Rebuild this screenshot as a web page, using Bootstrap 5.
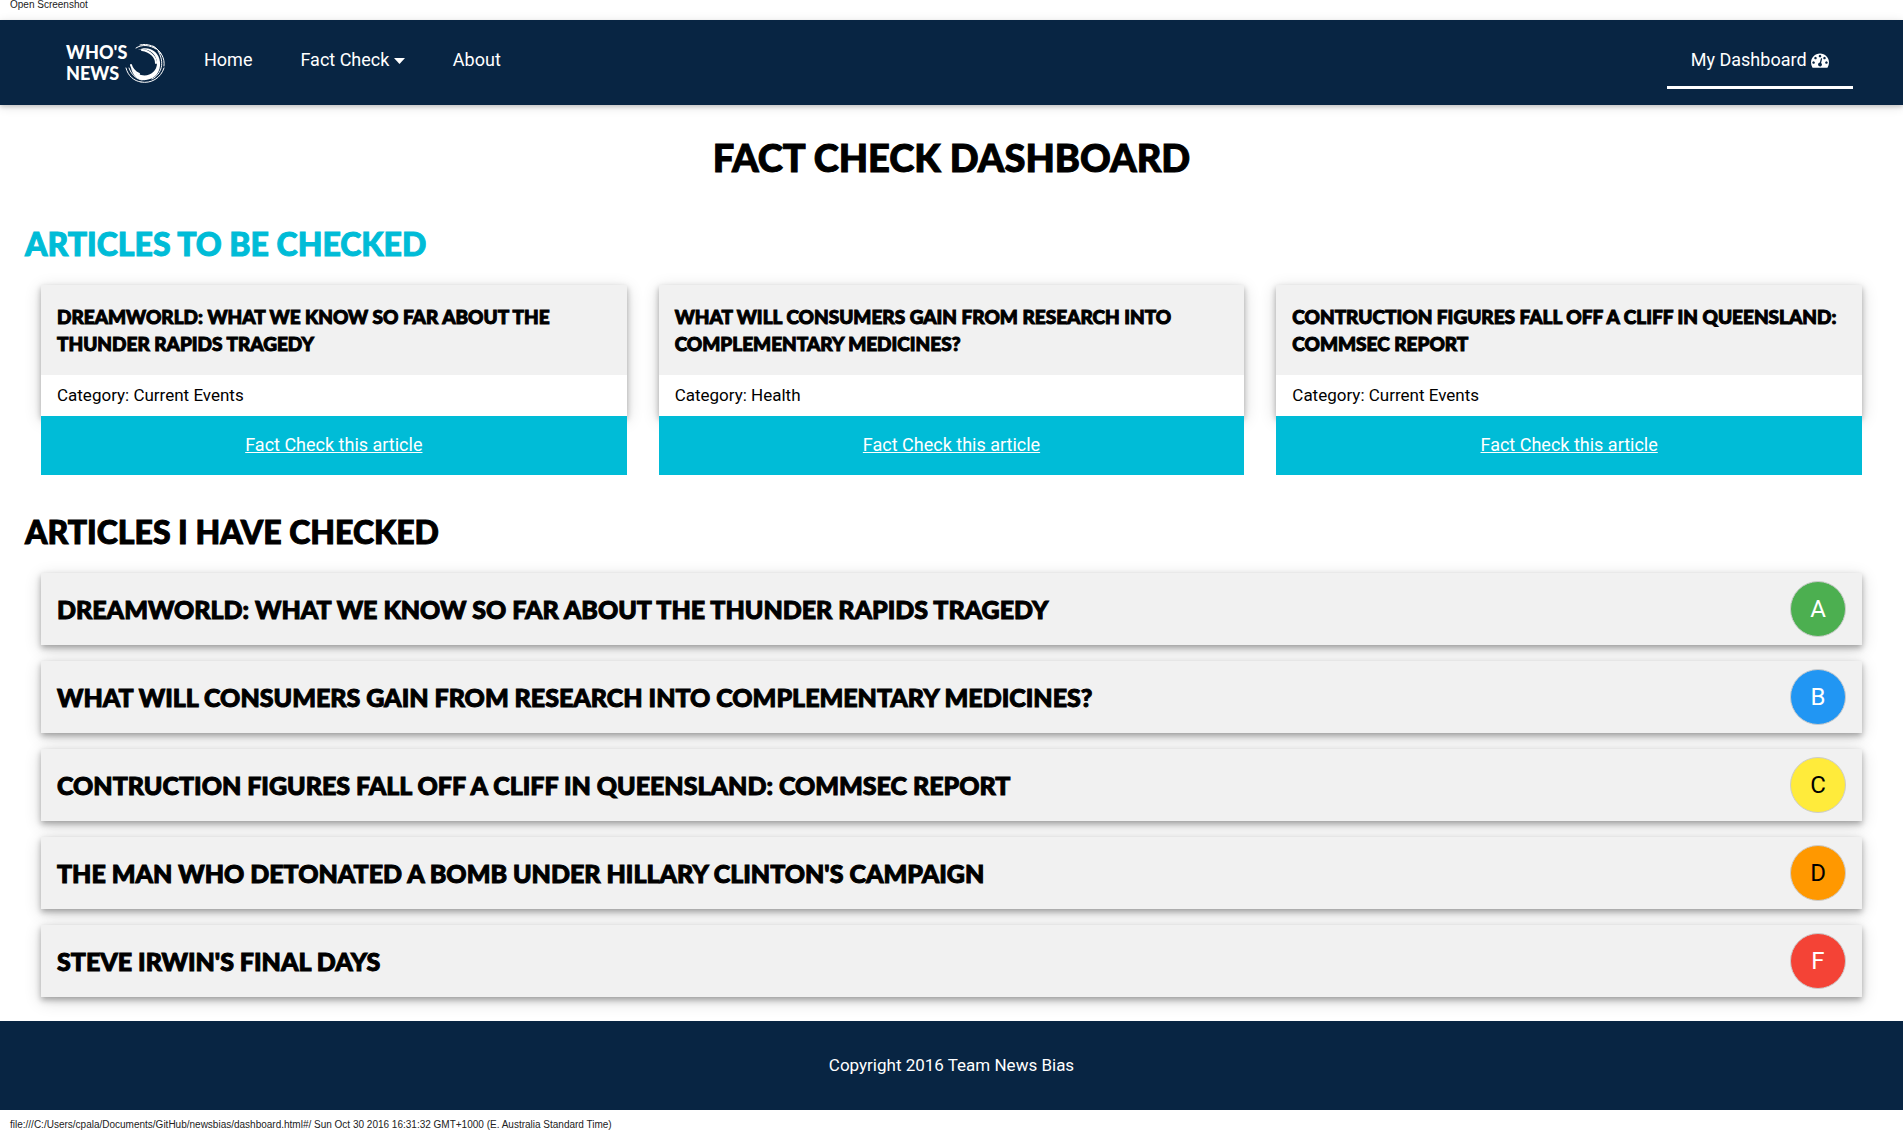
<!DOCTYPE html>
<html lang="en">
<head>
<meta charset="utf-8">
<meta name="viewport" content="width=device-width, initial-scale=1">
<title>Who's News - Fact Check Dashboard</title>
<link rel="stylesheet" href="https://cdn.jsdelivr.net/npm/bootstrap@5.3.0/dist/css/bootstrap.min.css">
<style>
body { font-family: Roboto, sans-serif; font-size: 17px; line-height: 25px; color: #000; background: #fff; }
.strip { height: 20px; padding: 0 10px; font: 10px/10px "Liberation Sans", Arial, sans-serif; color: #222; }
.strip-end { padding-top: 10px; }
.site-nav { background: #082543; height: 85px; padding: 10px 50px 10px 66px; box-shadow: 0 2px 4px rgba(0,0,0,.16), 0 2px 10px rgba(0,0,0,.12); }
.site-nav .nav-link { color: #fff; font-size: 18px; line-height: 27px; padding: 16px 24px 13px; border-bottom: 3px solid transparent; }
.site-nav .nav-link.active { border-bottom-color: #fff; }
.brand { color: #fff; font: 900 18px/21px Lato, sans-serif; width: 114px; }
.brand svg { width: 40px; height: 40px; margin-left: -2px; }
.caret { width: 11px; height: 6px; }
.gauge { width: 18px; height: 18px; vertical-align: -3px; }
.heading-font { font-family: Lato, sans-serif; font-weight: 900; text-transform: uppercase; margin: 0; -webkit-text-stroke: 1px currentColor; }
h1.heading-font { font-size: 38px; line-height: 52px; }
h2.heading-font { font-size: 32px; line-height: 44px; margin-bottom: 19px; }
.text-cyan { color: #00bcd7; }
main { padding: 26px 25px 24px; }
.todo { padding-top: 39px; }
.done { padding-top: 35px; }
.panel { background: #f1f1f1; box-shadow: 0 3px 6px rgba(0,0,0,.3), 0 4px 16px rgba(0,0,0,.16); }
.article { background: #fff; }
.article-head { background: #f1f1f1; padding: 18px 16px; }
.article-head h3 { font-size: 19px; line-height: 27px; }
.check-link { background: #00bcd7; color: #fff; font-size: 18px; line-height: 27px; padding: 15px 16px 17px; position: relative; }
.check-link:hover { color: #fff; }
.checked { height: 72px; padding: 0 16px; }
.checked h3 { font-size: 25px; line-height: 36px; }
.grade { width: 56px; height: 56px; font-size: 24px; line-height: 36px; border: 1px solid #ccc; }
.grade-a { background: #4caf50; color: #fff; }
.grade-b { background: #2196f3; color: #fff; }
.grade-c { background: #ffeb3b; }
.grade-d { background: #ff9800; }
.grade-f { background: #f44336; color: #fff; }
.site-foot { background: #082543; color: #fff; padding: 32px 16px; }
</style>
<script src="https://cdn.jsdelivr.net/npm/bootstrap@5.3.0/dist/js/bootstrap.bundle.min.js"></script>
</head>
<body>
<div class="strip">Open Screenshot</div>
<nav class="site-nav d-flex align-items-start">
  <a class="brand d-flex align-items-center align-self-center text-decoration-none" href="#">
    <span>WHO'S<br>NEWS</span>
    <svg class="flex-shrink-0" viewBox="0 0 40 40" fill="none" stroke="#fff" stroke-linecap="round" aria-hidden="true">
      <path fill="#fff" stroke="none" d="M13 7C23 4 32 11 32 20C32 29 24 34 16 32C12 31 8 29 6 24C7 33 14 38 21 37C30 36 36 29 35 19C34 8 23 2 13 7Z"/>
      <path d="M11 5C17 1 25 2 31 6" stroke-width="1"/>
      <path d="M15 2C22 0 32 3 36 11" stroke-width="1"/>
      <path d="M28 3C36 8 40 15 39 23" stroke-width="1"/>
      <path d="M33 8C40 19 37 31 27 36" stroke-width="1"/>
      <path d="M39 25C36 35 26 41 16 39" stroke-width="1"/>
      <path d="M1 25C3 33 9 38 16 39" stroke-width="1"/>
      <path d="M4 25C6 31 11 36 17 37" stroke-width="1"/>
      <path d="M6 22C7 26 10 29 14 31" stroke-width="2"/>
      <path d="M17 7C25 8 31 14 31 20" stroke-width="2"/>
    </svg>
  </a>
  <ul class="nav">
    <li class="nav-item"><a class="nav-link" href="#">Home</a></li>
    <li class="nav-item"><a class="nav-link" href="#">Fact Check <svg class="caret align-middle" viewBox="0 0 11 6" aria-hidden="true"><path fill="#fff" d="M0 0H11L5.5 6Z"/></svg></a></li>
    <li class="nav-item"><a class="nav-link" href="#">About</a></li>
  </ul>
  <ul class="nav ms-auto">
    <li class="nav-item"><a class="nav-link active" href="#">My Dashboard <svg class="gauge" viewBox="0 0 1792 1792" aria-hidden="true"><path fill="#fff" d="M384 1152q0-53-37.5-90.5t-90.5-37.5-90.5 37.5-37.5 90.5 37.5 90.5 90.5 37.5 90.5-37.5 37.5-90.5zm192-448q0-53-37.5-90.5t-90.5-37.5-90.5 37.5-37.5 90.5 37.5 90.5 90.5 37.5 90.5-37.5 37.5-90.5zm428 481l101-382q6-26-7.5-48.5t-38.5-29.5-48 6.5-30 39.5l-101 382q-60 5-107 43.5t-63 98.5q-20 77 20 146t117 89 146-20 89-117q16-60-6-117t-72-91zm660-33q0-53-37.5-90.5t-90.5-37.5-90.5 37.5-37.5 90.5 37.5 90.5 90.5 37.5 90.5-37.5 37.5-90.5zm-640-640q0-53-37.5-90.5t-90.5-37.5-90.5 37.5-37.5 90.5 37.5 90.5 90.5 37.5 90.5-37.5 37.5-90.5zm448 192q0-53-37.5-90.5t-90.5-37.5-90.5 37.5-37.5 90.5 37.5 90.5 90.5 37.5 90.5-37.5 37.5-90.5zm320 448q0 261-141 483-19 29-54 29h-1402q-35 0-54-29-141-221-141-483 0-182 71-348t191-286 286-191 348-71 348 71 286 191 191 286 71 348z"/></svg></a></li>
  </ul>
</nav>
<main>
  <h1 class="heading-font text-center">Fact Check Dashboard</h1>
  <section class="todo">
    <h2 class="heading-font text-cyan">Articles to be checked</h2>
    <div class="row gx-0">
      <div class="col-4 px-3">
        <article class="panel article">
          <div class="article-head"><h3 class="heading-font">Dreamworld: What we know so far about the Thunder Rapids tragedy</h3></div>
          <div class="px-3 py-2">Category: Current Events</div>
        </article>
        <a class="check-link d-block text-center" href="#">Fact Check this article</a>
      </div>
      <div class="col-4 px-3">
        <article class="panel article">
          <div class="article-head"><h3 class="heading-font">What will consumers gain from research into complementary medicines?</h3></div>
          <div class="px-3 py-2">Category: Health</div>
        </article>
        <a class="check-link d-block text-center" href="#">Fact Check this article</a>
      </div>
      <div class="col-4 px-3">
        <article class="panel article">
          <div class="article-head"><h3 class="heading-font">Contruction figures fall off a cliff in Queensland: CommSec report</h3></div>
          <div class="px-3 py-2">Category: Current Events</div>
        </article>
        <a class="check-link d-block text-center" href="#">Fact Check this article</a>
      </div>
    </div>
  </section>
  <section class="done">
    <h2 class="heading-font">Articles I have checked</h2>
    <div class="d-flex flex-column gap-3 px-3">
      <article class="panel checked d-flex align-items-center justify-content-between"><h3 class="heading-font">Dreamworld: What we know so far about the Thunder Rapids tragedy</h3><span class="grade grade-a rounded-circle d-flex align-items-center justify-content-center">A</span></article>
      <article class="panel checked d-flex align-items-center justify-content-between"><h3 class="heading-font">What will consumers gain from research into complementary medicines?</h3><span class="grade grade-b rounded-circle d-flex align-items-center justify-content-center">B</span></article>
      <article class="panel checked d-flex align-items-center justify-content-between"><h3 class="heading-font">Contruction figures fall off a cliff in Queensland: CommSec report</h3><span class="grade grade-c rounded-circle d-flex align-items-center justify-content-center">C</span></article>
      <article class="panel checked d-flex align-items-center justify-content-between"><h3 class="heading-font">The man who detonated a bomb under Hillary Clinton's campaign</h3><span class="grade grade-d rounded-circle d-flex align-items-center justify-content-center">D</span></article>
      <article class="panel checked d-flex align-items-center justify-content-between"><h3 class="heading-font">Steve Irwin's final days</h3><span class="grade grade-f rounded-circle d-flex align-items-center justify-content-center">F</span></article>
    </div>
  </section>
</main>
<footer class="site-foot text-center">Copyright 2016 Team News Bias</footer>
<div class="strip strip-end">file:///C:/Users/cpala/Documents/GitHub/newsbias/dashboard.html#/ Sun Oct 30 2016 16:31:32 GMT+1000 (E. Australia Standard Time)</div>
</body>
</html>
